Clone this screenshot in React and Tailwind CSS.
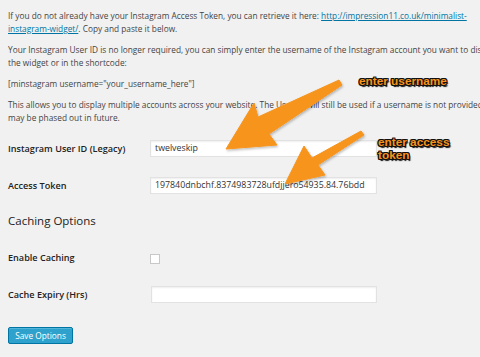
import React from "react";

export default function App() {
  const font = { fontFamily: '"Open Sans", "Liberation Sans", sans-serif' };
  const ann = {
    fontFamily: '"Liberation Sans", Arial, sans-serif',
    textShadow:
      "1px 0 0 #111, -1px 0 0 #111, 0 1px 0 #111, 0 -1px 0 #111, 1px 1px 0 #111, -1px -1px 0 #111, 1px -1px 0 #111, -1px 1px 0 #111, 1.5px 1.5px 1px #000",
  };
  return (
    <div className="relative w-[480px] h-[357px] overflow-hidden bg-[#f1f1f1] text-[#444]" style={font}>
      <div className="pl-[8px] pt-[9px] text-[8.3px] leading-[13px] whitespace-nowrap">
        <p className="mb-[8px]">
          If you do not already have your Instagram Access Token, you can retrieve it here:{" "}
          <span className="text-[#0074a2] underline">http://impression11.co.uk/minimalist-</span>
          <br />
          <span className="text-[#0074a2] underline">instagram-widget/</span>. Copy and paste it below.
        </p>
        <p className="mb-[8px]">
          Your Instagram User ID is no longer required, you can simply enter the username of the Instagram account you want to display in
          <br />
          the widget or in the shortcode:
        </p>
        <p className="mb-[8px]">[minstagram username="your_username_here"]</p>
        <p>
          This allows you to display multiple accounts across your website. The User ID will still be used if a username is not provided, but
          <br />
          may be phased out in future.
        </p>
      </div>

      <div className="pl-[8px] mt-[16px]">
        <div className="flex items-center h-[17px]">
          <div className="w-[142px] text-[9.1px] font-semibold text-[#222]">Instagram User ID (Legacy)</div>
          <div className="w-[227px] h-[17px] bg-white border border-[#e2e2e2] shadow-[inset_0_1px_2px_rgba(0,0,0,0.07)] px-[4px] text-[8.8px] leading-[15px] text-[#333]">twelveskip</div>
        </div>
        <div className="flex items-center h-[17px] mt-[20px]">
          <div className="w-[142px] text-[9.1px] font-semibold text-[#222]">Access Token</div>
          <div className="w-[227px] h-[17px] bg-white border border-[#e2e2e2] shadow-[inset_0_1px_2px_rgba(0,0,0,0.07)] px-[4px] text-[8.8px] leading-[15px] text-[#333] whitespace-nowrap overflow-hidden">197840dnbchf.8374983728ufdjjero54935.84.76bdd</div>
        </div>
        <h3 className="mt-[19px] h-[16px] text-[11.5px] leading-[16px] font-medium text-[#222]">Caching Options</h3>
        <div className="flex items-center h-[17px] mt-[20px]">
          <div className="w-[142px] text-[9.1px] font-semibold text-[#222]">Enable Caching</div>
          <div className="w-[10px] h-[10px] mt-[2px] bg-white border border-[#c8c8c8]" />
        </div>
        <div className="flex items-center h-[17px] mt-[20px]">
          <div className="w-[143px] text-[9.1px] font-semibold text-[#222]">Cache Expiry (Hrs)</div>
          <div className="w-[226px] h-[17px] bg-white border border-[#e2e2e2] shadow-[inset_0_1px_2px_rgba(0,0,0,0.07)]" />
        </div>
        <button className="mt-[24px] w-[65px] h-[17px] bg-[#2ea2cc] border border-[#0074a2] rounded-[2px] text-white text-[8.3px] leading-[15px] shadow-[inset_0_1px_0_rgba(120,200,230,0.5)]">
          Save Options
        </button>
      </div>

      <svg className="absolute left-0 top-0 pointer-events-none" width="480" height="357" viewBox="0 0 480 357">
        <defs>
          <filter id="sh" x="-20%" y="-20%" width="140%" height="140%">
            <feDropShadow dx="1" dy="1.5" stdDeviation="1.2" floodColor="#000" floodOpacity="0.25" />
          </filter>
        </defs>
        <polygon filter="url(#sh)" fill="#f7941d" points="339,80 258,117 254,103 226,149 277,145 269,134 342,85" strokeLinejoin="round" stroke="#f7941d" strokeWidth="1" />
        <polygon filter="url(#sh)" fill="#f7941d" points="361,131 312,158 304,146 285,184 325,175 318,165 364,135" strokeLinejoin="round" stroke="#f7941d" strokeWidth="1" />
      </svg>

      <div className="absolute left-[359px] top-[74px] text-[11.8px] font-bold leading-[14px] text-[#f7941d] whitespace-nowrap" style={ann}>
        enter username
      </div>
      <div className="absolute left-[378px] top-[136px] text-[11.8px] font-bold leading-[13px] text-[#f7941d] whitespace-nowrap" style={ann}>
        enter access
        <br />
        token
      </div>
    </div>
  );
}
